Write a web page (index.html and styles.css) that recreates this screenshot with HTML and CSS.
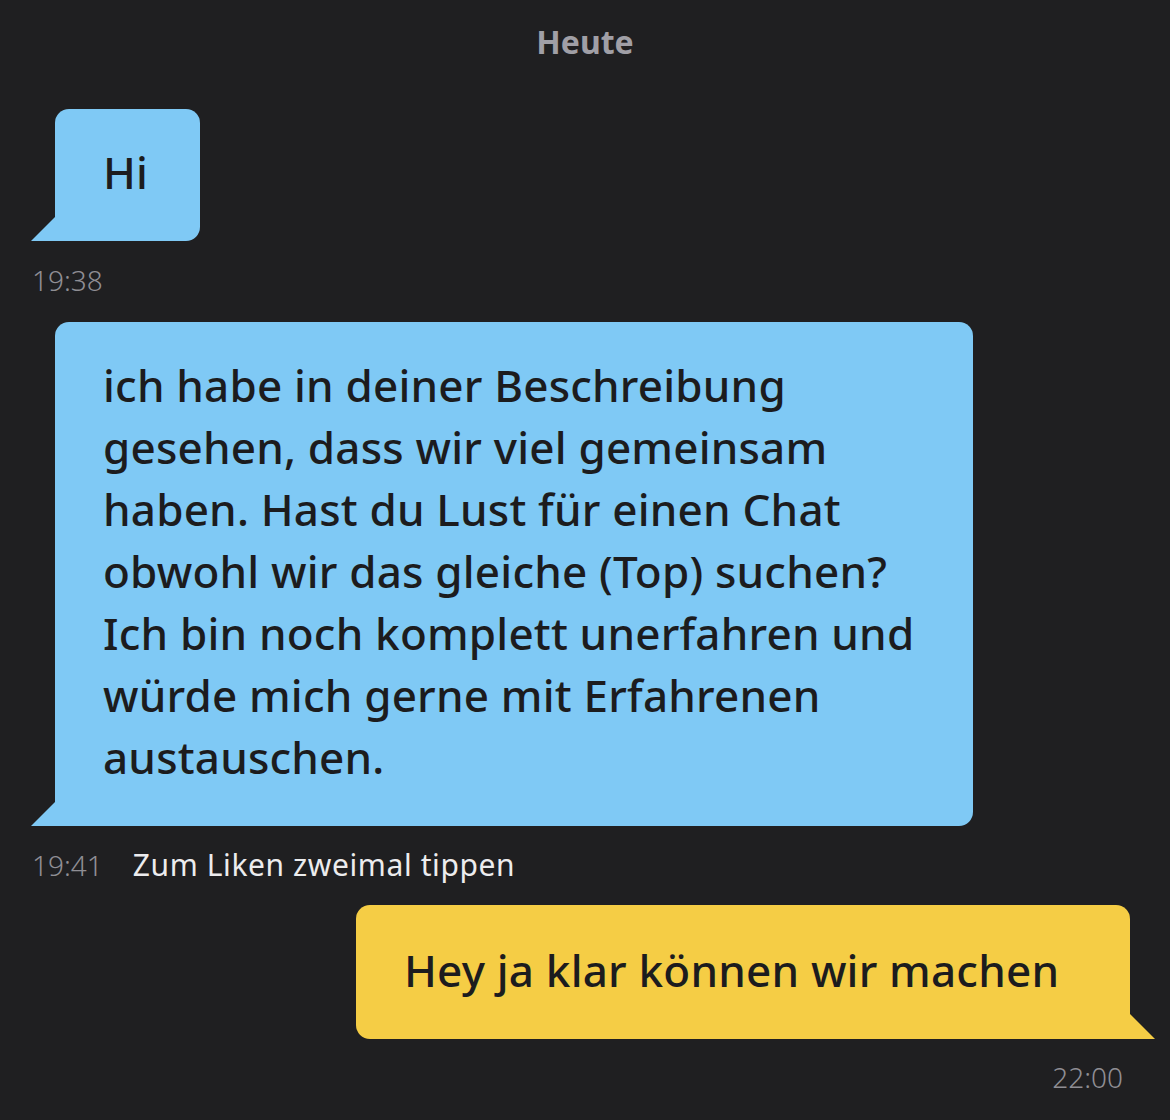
FILE: index.html
```html
<!DOCTYPE html>
<html lang="de">
<head>
  <meta charset="UTF-8">
  <title>Chat</title>
  <meta name="viewport" content="width=device-width, initial-scale=1">
  <link rel="stylesheet" href="styles.css">
</head>
<body>

  <div class="chat">
    <div class="chat-day">Heute</div>

    <div class="msg msg-in">
      <div class="bubble bubble-in bubble-short">Hi</div>
      <div class="msg-meta"><span class="msg-time">19:38</span></div>
    </div>

    <div class="msg msg-in">
      <div class="bubble bubble-in bubble-long">
        ich habe in deiner Beschreibung<br>
        gesehen, dass wir viel gemeinsam<br>
        haben. Hast du Lust für einen Chat<br>
        obwohl wir das gleiche (Top) suchen?<br>
        Ich bin noch komplett unerfahren und<br>
        würde mich gerne mit Erfahrenen<br>
        austauschen.
      </div>
      <div class="msg-meta">
        <span class="msg-time">19:41</span>
        <span class="msg-hint">Zum Liken zweimal tippen</span>
      </div>
    </div>

    <div class="msg msg-out">
      <div class="bubble bubble-out">Hey ja klar können wir machen</div>
      <div class="msg-meta"><span class="msg-time">22:00</span></div>
    </div>
  </div>

</body>
</html>
```

FILE: styles.css
```css
body {
  margin: 0;
  background-color: #1f1f21;
  font-family: "Noto Sans", "Open Sans", sans-serif;
}

.chat {
  display: flex;
  flex-direction: column;
  padding: 22px 15px 0 31px;
}

.chat-day {
  text-align: center;
  font-size: 32px;
  line-height: 40px;
  font-weight: 700;
  color: #a09fa6;
  padding-right: 16px;
}

.msg {
  display: flex;
  flex-direction: column;
}
.msg-in {
  align-items: flex-start;
}
.msg-out {
  align-items: flex-end;
}

.bubble {
  position: relative;
  box-sizing: border-box;
  font-size: 44px;
  font-weight: 500;
  letter-spacing: 0.2px;
  line-height: 62px;
  color: #1c1c1e;
  border-radius: 14px;
}

/* the little tail in the bottom corner */
.bubble::after {
  content: "";
  position: absolute;
  bottom: 0;
  width: 25px;
  height: 25px;
}

.bubble-in {
  margin-left: 24px;
  background-color: #7fc9f5;
  border-bottom-left-radius: 0;
  padding: 32px 40px 38px 48px;
}
.bubble-in::after {
  left: -24px;
  background-color: #7fc9f5;
  clip-path: polygon(0 100%, 100% 0, 100% 100%);
}

.bubble-short {
  width: 145px;
  margin-top: 47px;
}
.bubble-long {
  width: 918px;
  margin-top: 25px;
}

.bubble-out {
  margin-right: 25px;
  margin-top: 23px;
  width: 774px;
  background-color: #f5cd45;
  border-bottom-right-radius: 0;
  padding: 34px 40px 38px 48px;
}
.bubble-out::after {
  right: -25px;
  background-color: #f5cd45;
  clip-path: polygon(0 0, 100% 100%, 0 100%);
}

.msg-meta {
  display: flex;
  gap: 30px;
  margin-top: 22px;
  font-size: 28px;
  line-height: 34px;
  padding-left: 1px;
}
.msg-out .msg-meta {
  padding-right: 32px;
  margin-top: 21px;
}

.msg-time {
  color: #8f8e94;
  font-weight: 300;
}
.msg-hint {
  color: #ececee;
  font-size: 30px;
  letter-spacing: 0.6px;
}
```
